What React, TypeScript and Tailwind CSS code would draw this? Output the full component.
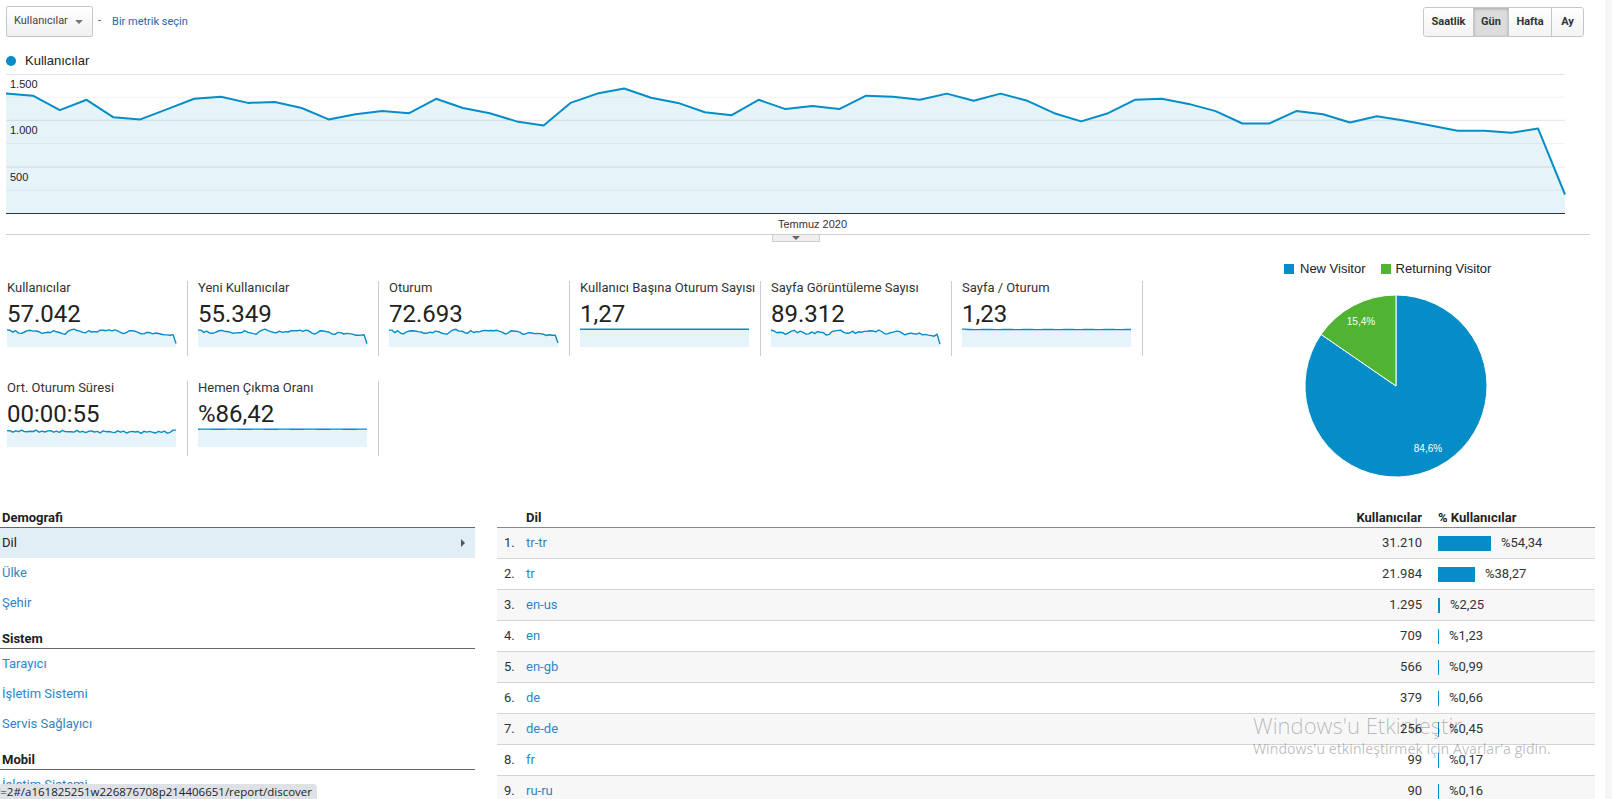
import React from "react";

const BLUE = "#058dc7";

// daily users, read off the chart (pixel rows)
const raw = [
  91, 93, 107, 97, 114, 116, 106, 96, 94, 100, 99, 105, 116, 111, 108, 110, 96, 105, 110, 118, 122, 100, 91, 86,
  95, 100, 109, 112, 97, 106, 103, 106, 93, 94, 97, 91, 98, 91, 98, 110, 118, 110, 97, 96, 101, 108, 120, 120, 108,
  111, 119, 113, 117, 122, 127, 127, 129, 125, 189,
];
const base = raw.map((p) => 213 - p * 1.029);

const spark = {
  users: base,
  newUsers: base.map((v, i) => v * 0.97 + 2 * Math.sin(i * 1.7)),
  sessions: base.map((v, i) => v + 3 * Math.sin(i * 2.3)),
  perUser: base.map((_, i) => 1.27 + 0.004 * Math.sin(i * 1.1)),
  pageviews: base.map((v, i) => v + 5 * Math.sin(i * 1.9) + 3 * Math.cos(i * 3.1)),
  perSession: base.map((_, i) => (i < 2 ? 1.27 : 1.235 + 0.003 * Math.sin(i * 0.9))),
  duration: base.map((_, i) => (i > 56 ? 60 : 56 + 3 * Math.sin(i * 2.7) + 2 * Math.cos(i * 1.3) - i * 0.07)),
  bounce: base.map((_, i) => 86.4 + 0.15 * Math.sin(i * 0.7)),
};

function Sparkline({ values, max }: { values: number[]; max: number }) {
  const w = 169;
  const h = 19;
  const line = values
    .map((v, i) => `${((i * w) / (values.length - 1)).toFixed(1)},${(1 + (1 - v / max) * (h - 2)).toFixed(1)}`)
    .join(" ");
  return (
    <svg width={w} height={h} className="block overflow-visible">
      <polygon points={`0,${h} ${line} ${w},${h}`} fill="#e6f4f9" />
      <polyline points={line} fill="none" stroke={BLUE} strokeWidth={1.4} strokeLinejoin="round" />
    </svg>
  );
}

function MainChart() {
  const W = 1559;
  const H = 139;
  const pts = raw.map((p, i) => `${((i * W) / 58).toFixed(1)},${(p * 1.029 - 74).toFixed(1)}`).join(" ");
  const minor = [23.2, 69.6, 116.2];
  const major = [0.5, 46.3, 93];
  return (
    <div className="relative ml-[6px] w-[1559px] h-[140px] border-b border-[#333]">
      <svg width={W} height={H} className="block overflow-visible">
        {minor.map((y) => (
          <line key={y} x1={0} x2={W} y1={y} y2={y} stroke="#f1f1f1" />
        ))}
        {major.map((y) => (
          <line key={y} x1={0} x2={W} y1={y} y2={y} stroke="#e4e4e4" />
        ))}
        <polygon points={`0,${H} ${pts} ${W},${H}`} fill={BLUE} fillOpacity={0.1} />
        <polyline points={pts} fill="none" stroke={BLUE} strokeWidth={2} strokeLinejoin="round" />
      </svg>
      <div className="absolute left-[4px] top-[4px] font-['Liberation_Sans',Arial,sans-serif] text-[11px] leading-[13px] text-[#222]">
        1.500
      </div>
      <div className="absolute left-[4px] top-[50px] font-['Liberation_Sans',Arial,sans-serif] text-[11px] leading-[13px] text-[#222]">
        1.000
      </div>
      <div className="absolute left-[4px] top-[97px] font-['Liberation_Sans',Arial,sans-serif] text-[11px] leading-[13px] text-[#222]">
        500
      </div>
    </div>
  );
}

function Metric({
  label,
  value,
  data,
  max,
  first,
}: {
  label: string;
  value: string;
  data: number[];
  max: number;
  first?: boolean;
}) {
  return (
    <div
      className={`${first ? "w-[188px] pl-[7px]" : "w-[191px] pl-[10px]"} h-[75px] border-r border-[#cccccc] flex flex-col`}
    >
      <div className="-mt-[1px] whitespace-nowrap text-[13px] leading-[15px] text-[#333]">{label}</div>
      <div className="mt-[5px] text-[24px] leading-[28px] text-[#222]">{value}</div>
      <Sparkline values={data} max={max} />
    </div>
  );
}

function Pie() {
  const r = 91;
  const c = 92;
  const a = 0.154 * 2 * Math.PI;
  const px = c - r * Math.sin(a);
  const py = c - r * Math.cos(a);
  return (
    <svg width={184} height={184} className="block ml-[20px] mt-[18px]">
      <path d={`M${c},${c} L${c},${c - r} A${r},${r} 0 1 1 ${px},${py} Z`} fill={BLUE} stroke="#fff" strokeWidth={1} />
      <path d={`M${c},${c} L${c},${c - r} A${r},${r} 0 0 0 ${px},${py} Z`} fill="#50b432" stroke="#fff" strokeWidth={1} />
      <text x={57} y={31} textAnchor="middle" fontSize={10} fill="#fff" fontFamily="Liberation Sans, Arial, sans-serif">
        15,4%
      </text>
      <text x={124} y={158} textAnchor="middle" fontSize={10} fill="#fff" fontFamily="Liberation Sans, Arial, sans-serif">
        84,6%
      </text>
    </svg>
  );
}

function NavHeader({ children }: { children: React.ReactNode }) {
  return (
    <div className="flex h-[31px] items-end border-b border-[#666] pb-[1px] pl-[2px] text-[13px] font-bold leading-[16px] text-[#222]">
      {children}
    </div>
  );
}

function NavLink({ children }: { children: React.ReactNode }) {
  return <div className="flex h-[30px] items-center pl-[2px] text-[13px] text-[#2e86c8]">{children}</div>;
}

const rows = [
  ["tr-tr", "31.210", 54.34, "%54,34"],
  ["tr", "21.984", 38.27, "%38,27"],
  ["en-us", "1.295", 2.25, "%2,25"],
  ["en", "709", 1.23, "%1,23"],
  ["en-gb", "566", 0.99, "%0,99"],
  ["de", "379", 0.66, "%0,66"],
  ["de-de", "256", 0.45, "%0,45"],
  ["fr", "99", 0.17, "%0,17"],
  ["ru-ru", "90", 0.16, "%0,16"],
  ["es", "74", 0.13, "%0,13"],
] as const;

function LangTable() {
  return (
    <div className="ml-[22px] w-[1098px]">
      <div className="flex h-[31px] items-end border-b border-[#888] pb-[1px] text-[13px] font-bold leading-[16px] text-[#222]">
        <div className="w-[29px]" />
        <div className="flex-1">Dil</div>
        <div className="w-[90px] text-right">Kullanıcılar</div>
        <div className="ml-[16px] w-[157px]">% Kullanıcılar</div>
      </div>
      {rows.map(([lang, users, pct, pctText], i) => (
        <div
          key={lang}
          className={`flex h-[31px] items-center border-b border-[#d4d4d4] text-[13px] ${i % 2 === 0 ? "bg-[#f7f7f7]" : "bg-white"}`}
        >
          <div className="w-[29px] pl-[7px] text-[#333]">{i + 1}.</div>
          <div className="flex-1 text-[#2e86c8]">{lang}</div>
          <div className="w-[90px] text-right text-[#333]">{users}</div>
          <div className="ml-[16px] flex w-[157px] items-center">
            <div className="h-[15px] bg-[#058dc7]" style={{ width: Math.max(1, Math.round(pct * 0.975)) }} />
            <div className="ml-[10px] text-[#333]">{pctText}</div>
          </div>
        </div>
      ))}
    </div>
  );
}

export default function App() {
  return (
    <div className="relative flex h-[799px] w-[1612px] overflow-hidden bg-white font-['Roboto',sans-serif] text-[#333]">
      <div className="w-[1605px]">
        {/* toolbar */}
        <div className="flex items-start pl-[6px] pt-[6px]">
          <div className="flex h-[31px] w-[87px] items-center justify-between rounded-[2px] border border-[#c6c6c6] bg-gradient-to-b from-white to-[#f0f0f0] pl-[7px] pr-[9px] text-[11px] text-[#444]">
            <span>Kullanıcılar</span>
            <span className="h-0 w-0 border-x-[4px] border-t-[4px] border-x-transparent border-t-[#777]" />
          </div>
          <div className="ml-[5px] mt-[7px] text-[11px] text-[#444]">-</div>
          <div className="ml-[11px] mt-[8px] text-[11px] text-[#2a63b4]">Bir metrik seçin</div>
          <div className="ml-auto mr-[21px] mt-[1px] flex h-[30px] overflow-hidden rounded-[3px] border border-[#c6c6c6] text-[11px] font-bold text-[#333]">
            <div className="flex w-[49px] items-center justify-center bg-gradient-to-b from-white to-[#f3f3f3]">Saatlik</div>
            <div className="flex w-[35px] items-center justify-center border-l border-[#c6c6c6] bg-[#dcdcdc] shadow-[inset_0_1px_3px_rgba(0,0,0,0.25)]">
              Gün
            </div>
            <div className="flex w-[43px] items-center justify-center border-l border-[#c6c6c6] bg-gradient-to-b from-white to-[#f3f3f3]">
              Hafta
            </div>
            <div className="flex w-[32px] items-center justify-center border-l border-[#c6c6c6] bg-gradient-to-b from-white to-[#f3f3f3]">
              Ay
            </div>
          </div>
        </div>

        {/* legend */}
        <div className="mt-[16px] flex h-[16px] items-center pl-[6px] font-['Liberation_Sans',Arial,sans-serif] text-[13px] text-[#222]">
          <span className="h-[10px] w-[10px] rounded-full bg-[#058dc7]" />
          <span className="ml-[9px]">Kullanıcılar</span>
        </div>

        <div className="mt-[5px]">
          <MainChart />
        </div>
        <div className="flex h-[20px] items-center pl-[778px] font-['Liberation_Sans',Arial,sans-serif] text-[11px] text-[#333]">
          Temmuz 2020
        </div>
        <div className="ml-[6px] w-[1584px] border-t border-[#cfcfcf]">
          <div className="ml-[766px] flex h-[7px] w-[48px] items-start justify-center border-x border-b border-[#cfcfcf] bg-[#efefef]">
            <span className="mt-[1px] h-0 w-0 border-x-[4px] border-t-[4px] border-x-transparent border-t-[#666]" />
          </div>
        </div>

        {/* metrics + pie */}
        <div className="flex items-start">
          <div className="mt-[39px] flex w-[1143px] flex-col gap-[25px]">
            <div className="flex">
              <Metric first label="Kullanıcılar" value="57.042" data={spark.users} max={126} />
              <Metric label="Yeni Kullanıcılar" value="55.349" data={spark.newUsers} max={124} />
              <Metric label="Oturum" value="72.693" data={spark.sessions} max={128} />
              <Metric label="Kullanıcı Başına Oturum Sayısı" value="1,27" data={spark.perUser} max={1.285} />
              <Metric label="Sayfa Görüntüleme Sayısı" value="89.312" data={spark.pageviews} max={132} />
              <Metric label="Sayfa / Oturum" value="1,23" data={spark.perSession} max={1.275} />
            </div>
            <div className="flex">
              <Metric first label="Ort. Oturum Süresi" value="00:00:55" data={spark.duration} max={64} />
              <Metric label="Hemen Çıkma Oranı" value="%86,42" data={spark.bounce} max={87.2} />
            </div>
          </div>
          <div className="ml-[141px] pt-[19px]">
            <div className="flex h-[15px] items-center font-['Liberation_Sans',Arial,sans-serif] text-[13px] text-[#222]">
              <span className="h-[10px] w-[10px] bg-[#058dc7]" />
              <span className="ml-[6px]">New Visitor</span>
              <span className="ml-[15px] h-[10px] w-[10px] bg-[#50b432]" />
              <span className="ml-[5px]">Returning Visitor</span>
            </div>
            <Pie />
          </div>
        </div>

        {/* bottom tables */}
        <div className="mt-[19px] flex items-start">
          <div className="w-[475px]">
            <NavHeader>Demografi</NavHeader>
            <div className="flex h-[30px] items-center justify-between bg-[#e1eef6] pl-[2px] pr-[10px] text-[13px] text-[#222]">
              <span>Dil</span>
              <span className="h-0 w-0 border-y-[4px] border-l-[4px] border-y-transparent border-l-[#555]" />
            </div>
            <NavLink>Ülke</NavLink>
            <NavLink>Şehir</NavLink>
            <NavHeader>Sistem</NavHeader>
            <NavLink>Tarayıcı</NavLink>
            <NavLink>İşletim Sistemi</NavLink>
            <NavLink>Servis Sağlayıcı</NavLink>
            <NavHeader>Mobil</NavHeader>
            <NavLink>İşletim Sistemi</NavLink>
          </div>
          <LangTable />
        </div>
      </div>
      <div className="h-[799px] w-[7px] bg-[#f4f5f7]" />

      {/* windows activation watermark */}
      <div className="pointer-events-none absolute left-[1253px] top-[711px] font-['Open_Sans',sans-serif] text-[rgba(0,0,0,0.27)]">
        <div className="text-[22px] font-light leading-[28px]">Windows'u Etkinleştir</div>
        <div className="text-[14.2px] leading-[19px]">Windows'u etkinleştirmek için Ayarlar'a gidin.</div>
      </div>

      {/* browser status bubble */}
      <div className="absolute bottom-0 left-0 flex h-[15px] w-[317px] justify-end overflow-hidden rounded-tr-[4px] bg-[#dee1e6] pr-[5px] font-['Open_Sans',sans-serif] text-[11.5px] leading-[15px] text-[#202124]">
        <span className="whitespace-nowrap">r=2#/a161825251w226876708p214406651/report/discover</span>
      </div>
    </div>
  );
}
